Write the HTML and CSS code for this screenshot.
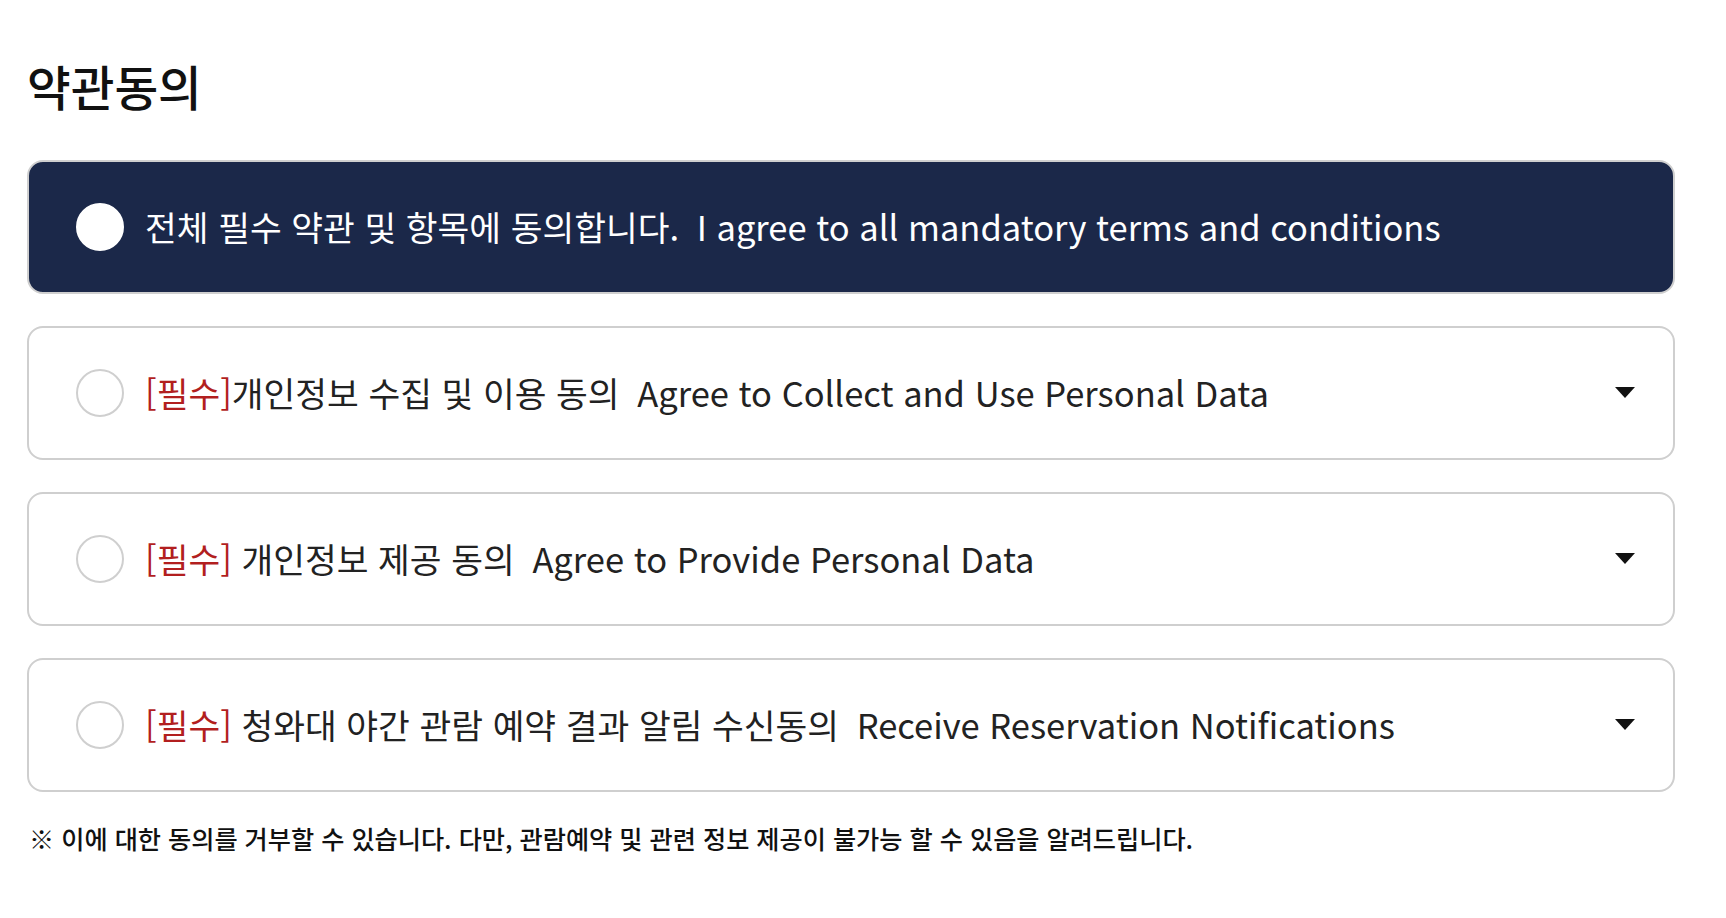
FILE: index.html
```html
<!DOCTYPE html>
<html lang="ko">
<head>
  <meta charset="UTF-8" />
  <meta name="viewport" content="width=device-width, initial-scale=1.0" />
  <title>약관동의</title>
  <link rel="stylesheet" href="styles.css">
</head>
<body>

  <section class="terms">
    <h2 class="terms-title">약관동의</h2>

    <!-- Agree all -->
    <div class="term-row all">
      <span class="check"></span>
      <p class="label">전체 필수 약관 및 항목에 동의합니다. <span class="en">I agree to all mandatory terms and conditions</span></p>
    </div>

    <!-- Required items -->
    <div class="term-row">
      <span class="check"></span>
      <p class="label"><span class="req">[필수]</span>개인정보 수집 및 이용 동의 <span class="en">Agree to Collect and Use Personal Data</span></p>
      <svg class="toggle" width="20" height="11" viewBox="0 0 20 11"><polygon points="0,0 20,0 10,11" /></svg>
    </div>

    <div class="term-row">
      <span class="check"></span>
      <p class="label"><span class="req">[필수]</span> 개인정보 제공 동의 <span class="en">Agree to Provide Personal Data</span></p>
      <svg class="toggle" width="20" height="11" viewBox="0 0 20 11"><polygon points="0,0 20,0 10,11" /></svg>
    </div>

    <div class="term-row">
      <span class="check"></span>
      <p class="label"><span class="req">[필수]</span> 청와대 야간 관람 예약 결과 알림 수신동의 <span class="en">Receive Reservation Notifications</span></p>
      <svg class="toggle" width="20" height="11" viewBox="0 0 20 11"><polygon points="0,0 20,0 10,11" /></svg>
    </div>

    <p class="notice">※ 이에 대한 동의를 거부할 수 있습니다. 다만, 관람예약 및 관련 정보 제공이 불가능 할 수 있음을 알려드립니다.</p>
  </section>

</body>
</html>
```

FILE: styles.css
```css
* { margin: 0; padding: 0; box-sizing: border-box; }
body {
  background: #fff;
  color: #222;
  font-family: "Noto Sans CJK KR", "Noto Sans", sans-serif;
}

.terms {
  width: 1675px;
  padding: 62px 0 0 27px;
}
.terms-title {
  font-size: 47.5px;
  font-weight: 500;
  line-height: 1;
  color: #111;
  margin-bottom: 50px;
}

.term-row {
  display: flex;
  align-items: center;
  height: 134px;
  padding: 0 38px 0 47px;
  margin-bottom: 32px;
  border: 2px solid #cfcfcf;
  border-radius: 16px;
  background: #fff;
}
.term-row.all {
  background: #1b2849;
  color: #fff;
}

.check {
  flex: none;
  width: 48px;
  height: 48px;
  border-radius: 50%;
  border: 2px solid #cfcfcf;
  background: #fff;
  margin-right: 21px;
}
.term-row.all .check {
  border-color: #fff;
}

.label {
  flex: 1;
  font-size: 34.5px;
  line-height: 1.2;
  white-space: nowrap;
}
.label .en {
  margin-left: 8px;
}
.req {
  color: #b21f1f;
}

.toggle {
  flex: none;
  fill: #111;
}

.notice {
  margin-top: -4px;
  padding-left: 2px;
  font-size: 25.2px;
  font-weight: 500;
  color: #111;
}
```
